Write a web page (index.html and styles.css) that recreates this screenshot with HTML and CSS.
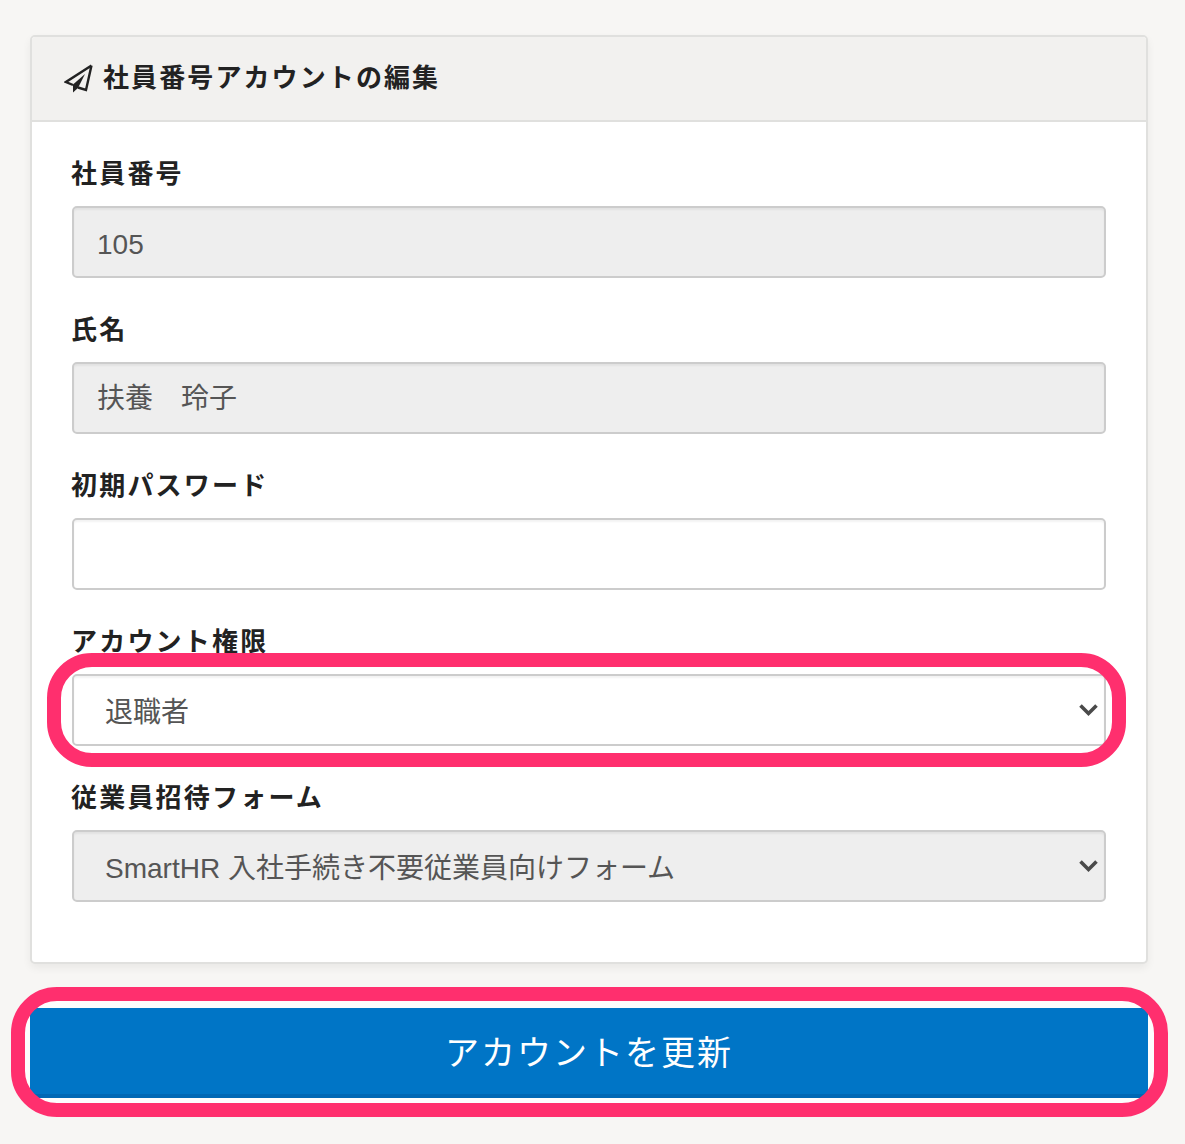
FILE: index.html
```html
<!DOCTYPE html>
<html lang="ja">
<head>
<meta charset="utf-8">
<title>社員番号アカウントの編集</title>
<link rel="stylesheet" href="styles.css">
</head>
<body>
<main class="page">
  <section class="card">
    <header class="card-head">
      <svg class="plane" viewBox="0 0 30 30" aria-hidden="true">
        <path d="M27.5 2.5 2 19l7 3M27.5 2.5 22 27l-8-2.5" fill="none" stroke="#222" stroke-width="2.400" stroke-linejoin="miter"/>
        <path d="M9 29.500V21.500l12-10.500-7 14Z" fill="#222"/>
      </svg>
      <h1 class="card-title">社員番号アカウントの編集</h1>
    </header>
    <div class="card-body">
      <div class="field">
        <label class="label">社員番号</label>
        <input class="control is-disabled text-latin" type="text" value="105" disabled>
      </div>
      <div class="field">
        <label class="label">氏名</label>
        <input class="control is-disabled text-cjk" type="text" value="扶養　玲子" disabled>
      </div>
      <div class="field">
        <label class="label">初期パスワード</label>
        <input class="control" type="text">
      </div>
      <div class="field">
        <label class="label">アカウント権限</label>
        <div class="select-wrap">
          <div class="control select">退職者</div>
          <svg class="chevron" viewBox="0 0 19 14" aria-hidden="true"><path d="M1.500 2.500 9.500 10.500 17.500 2.500" fill="none" stroke="#4a4a4a" stroke-width="3.600"/></svg>
          <span class="ring ring-select"></span>
        </div>
      </div>
      <div class="field">
        <label class="label">従業員招待フォーム</label>
        <div class="select-wrap">
          <div class="control select is-disabled">SmartHR 入社手続き不要従業員向けフォーム</div>
          <svg class="chevron" viewBox="0 0 19 14" aria-hidden="true"><path d="M1.500 2.500 9.500 10.500 17.500 2.500" fill="none" stroke="#4a4a4a" stroke-width="3.600"/></svg>
        </div>
      </div>
    </div>
  </section>
  <div class="submit-wrap">
    <button class="submit" type="button">アカウントを更新</button>
    <span class="ring ring-button"></span>
  </div>
</main>
</body>
</html>
```

FILE: styles.css
```css
* { box-sizing: border-box; }
html, body { margin: 0; }
body {
  background: #f7f6f4;
  color: #222;
  font-family: "Liberation Sans", "Noto Sans CJK JP", sans-serif;
}
.page {
  padding: 35px 37px 0 30px;
  height: 1144px;
  overflow: hidden;
}
.card {
  background: #fff;
  border: 2px solid #e0e0de;
  border-radius: 5px;
  height: 929px;
  box-shadow: 0 4px 8px rgba(0, 0, 0, .06);
}
.card-head {
  display: flex;
  align-items: center;
  gap: 9px;
  height: 85px;
  padding: 0 0 1px 32px;
  background: #f2f1ef;
  border-bottom: 2px solid #e0e0de;
  border-radius: 3px 3px 0 0;
}
.plane { width: 30px; height: 30px; flex: none; }
.card-title {
  margin: 0;
  font-size: 26px;
  font-weight: 700;
  letter-spacing: 2.1px;
  line-height: 36px;
}
.card-body { padding: 0 40px; }
.field { height: 156px; }
.label {
  display: block;
  height: 84px;
  margin-left: -1px;
  padding-top: 34px;
  font-size: 26px;
  font-weight: 700;
  letter-spacing: 2.2px;
  line-height: 36px;
}
.control {
  display: block;
  width: 100%;
  height: 72px;
  padding: 0 23px;
  border: 2px solid #ccc;
  border-radius: 5px;
  background: #fff;
  color: #555;
  font-family: inherit;
  font-size: 28px;
  line-height: 68px;
  outline: none;
  box-shadow: inset 0 2px 2px rgba(0, 0, 0, .05);
}
.is-disabled { background: #eee; opacity: 1; -webkit-text-fill-color: #555; }
.text-latin { padding-top: 6px; }
.text-cjk { padding-bottom: 4px; }
.select { padding-left: 31px; line-height: 74px; }
.select-wrap { position: relative; }
.chevron {
  position: absolute;
  right: 8px;
  top: 29px;
  width: 19px;
  height: 14px;
}
.ring {
  position: absolute;
  display: block;
  border: 14px solid #ff2f6e;
  pointer-events: none;
}
.ring-select {
  left: -25px;
  right: -20px;
  top: -21px;
  bottom: -21px;
  border-radius: 45px;
}
.submit-wrap {
  position: relative;
  margin-top: 44px;
  height: 90px;
}
.submit-wrap::before {
  content: "";
  position: absolute;
  left: -14px;
  right: -14px;
  top: -10px;
  bottom: -8px;
  border-radius: 32px;
  background: #fdfdfd;
}
.ring-button {
  left: -19px;
  right: -20px;
  top: -21px;
  bottom: -19px;
  border-radius: 46px;
}
.submit {
  position: relative;
  display: block;
  width: 100%;
  height: 90px;
  border: 0;
  border-bottom: 4px solid #0068b5;
  border-radius: 6px;
  background: #0075c6;
  color: #fff;
  font-family: inherit;
  font-size: 34px;
  letter-spacing: 2px;
  padding: 0 0 2px;
}
```
